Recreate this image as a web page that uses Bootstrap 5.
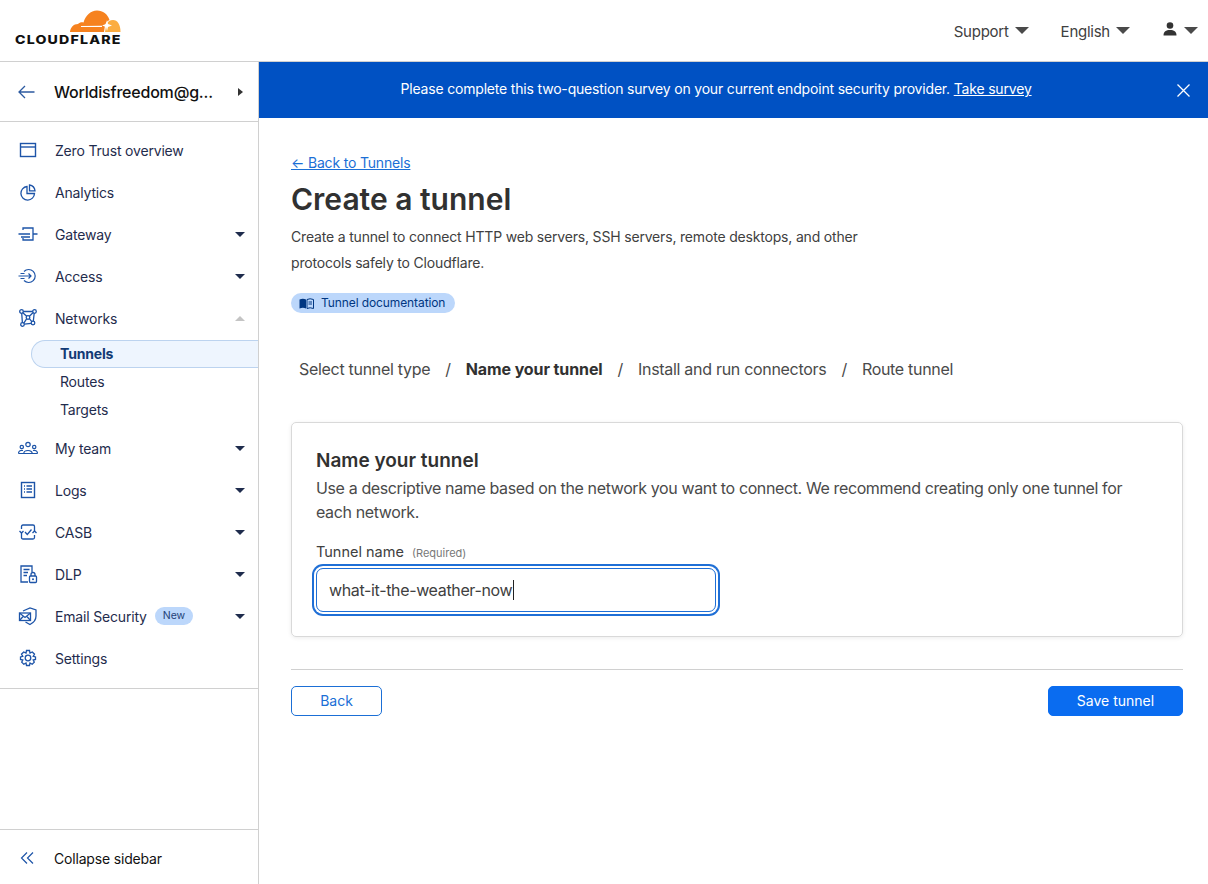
<!DOCTYPE html>
<html lang="en">
<head>
  <meta charset="utf-8">
  <title>Create a tunnel – Cloudflare Zero Trust</title>
  <meta name="viewport" content="width=device-width, initial-scale=1">
  <link href="https://cdn.jsdelivr.net/npm/bootstrap@5.3.2/dist/css/bootstrap.min.css" rel="stylesheet">
  <style>
    body { font-family: Inter, "Liberation Sans", sans-serif; font-size: 14px; letter-spacing: -.18px; color: #313131; height: 884px; overflow: hidden; }
    .top-head { height: 62px; border-bottom: 1px solid #d0d0d0; padding: 0 10px 0 15px; }
    .logo-box { width: 108px; margin-top: 9px; align-self: flex-start; }
    .logo-box svg { display: block; margin-left: 54px; }
    .logo-word { font-size: 12px; font-weight: 800; letter-spacing: 1px; color: #111; line-height: 12px; white-space: nowrap; transform: scaleX(1.18); transform-origin: left center; }
    .head-right { padding-top: 4px; }
    .head-link { font-size: 15px; letter-spacing: -.25px; color: #404040; }
    .tri-down { width: 0; height: 0; border-left: 7px solid transparent; border-right: 7px solid transparent; border-top: 7px solid #4a4a4a; margin-left: 6px; margin-bottom: 4px; }
    .gap-first { margin-right: 32px; }
    .gap-after { margin-right: 33px; }
    .user-icon { margin-right: 7px; margin-bottom: 7px; }
    .user-icon + .tri-down { margin-left: 0; }
    .side-bar { width: 259px; border-right: 1px solid #d0d0d0; height: 822px; flex-shrink: 0; }
    .acct-row { height: 60px; border-bottom: 1px solid #d0d0d0; padding: 0 15px 0 18px; color: #111; font-size: 16px; font-weight: 500; letter-spacing: -.2px; }
    .acct-name { margin-left: 18px; }
    .tri-right { width: 0; height: 0; border-top: 4px solid transparent; border-bottom: 4px solid transparent; border-left: 5px solid #333; margin-left: auto; }
    .side-list { padding: 8px 0; border-bottom: 1px solid #d0d0d0; height: 567px; }
    .side-item { height: 42px; padding: 0 13px 2px 18px; color: #1f2c4d; }
    .side-item svg { width: 20px; height: 20px; margin-right: 17px; flex-shrink: 0; }
    .tri-nav { width: 0; height: 0; border-left: 5px solid transparent; border-right: 5px solid transparent; border-top: 5px solid #1f2c4d; margin-left: auto; }
    .tri-up { border-top: 0; border-bottom: 5px solid #c4c4c4; }
    .sub-list { margin-bottom: 4px; }
    .sub-item { height: 28px; margin-left: 31px; padding: 0 0 2px 29px; color: #1f2c4d; display: flex; align-items: center; }
    .sub-active { background: #eef5fe; border: 1px solid #bcd3ef; border-right: 0; border-radius: 14px 0 0 14px; padding-left: 28px; font-weight: 700; color: #123a75; }
    .new-pill { background: #bcd7fb; color: #1f3f77; font-size: 10.5px; letter-spacing: 0; border-radius: 9px; padding: 0 8px; line-height: 18px; margin-left: 8px; }
    .side-foot { padding: 2px 0 0 20px; height: 55px; color: #111; border-top: 1px solid #d0d0d0; }
    .side-foot svg { margin-right: 19px; }
    .survey-bar { height: 56px; background: #0051c3; color: #fff; padding: 0 18px 0 0; }
    .survey-text { flex-grow: 1; text-align: center; padding-right: 4px; padding-bottom: 3px; }
    .survey-text a { color: #fff; }
    .main-pane { padding: 34px 25px 0 32px; }
    .back-link { color: #1b6fd6; line-height: 18px; display: inline-block; }
    .page-title { font-size: 30px; font-weight: 600; letter-spacing: 0; color: #313131; line-height: 36px; margin: 8px 0 7px; }
    .page-desc { line-height: 26px; width: 590px; color: #404040; margin-bottom: 17px; }
    .doc-pill { background: #bcd7fb; color: #003681; font-size: 12px; letter-spacing: -.1px; line-height: 20px; border-radius: 10px; padding: 0 8px; height: 20px; width: 164px; white-space: nowrap; }
    .doc-pill svg { margin-right: 7px; flex-shrink: 0; }
    .step-row { font-size: 16px; letter-spacing: -.3px; color: #4a4a4a; margin: 46px 0 0 8px; line-height: 20px; height: 20px; }
    .step-sep { margin: 0 15px; }
    .step-now { font-weight: 700; letter-spacing: -.1px; color: #313131; }
    .tunnel-card { margin-top: 43px; height: 215px; border: 1px solid #d9d9d9; border-radius: 5px; box-shadow: 0 1px 4px rgba(0,0,0,.08); padding: 25px 24px 24px; }
    .card-head { font-size: 19px; font-weight: 600; letter-spacing: 0; color: #313131; line-height: 26px; margin: 0; }
    .card-desc { font-size: 16px; letter-spacing: -.38px; line-height: 24px; color: #4a4a4a; margin: 2px 0 0; }
    .field-label { font-size: 14.5px; letter-spacing: 0; color: #404040; line-height: 18px; margin: 19px 0 6px; display: block; }
    .field-label small { font-size: 11px; color: #777; margin-left: 4px; }
    .field-wrap { width: 400px; }
    .name-input.form-control { height: 44px; width: 400px; border: 1px solid #1f6fd6; border-radius: 7px; padding: 0 12px; font-size: 16px; letter-spacing: -.35px; color: #404040; font-family: inherit; box-shadow: 0 0 0 2px #fff, 0 0 0 4px #1f6fd6; }
    .fake-caret { position: absolute; left: 197px; top: 12px; width: 1px; height: 20px; background: #222; }
    .foot-rule { margin: 32px 0 16px; border-top: 1px solid #d0d0d0; opacity: 1; }
    .btn-back.btn { width: 91px; height: 30px; padding: 0 0 2px; font-size: 14px; border-color: #1b6fd6; color: #1b6fd6; border-radius: 5px; }
    .btn-save.btn { width: 135px; height: 30px; padding: 0 0 2px; font-size: 14px; background: #0a6cf0; border-color: #0a6cf0; border-radius: 5px; }
  </style>
</head>
<body>

<header class="top-head d-flex align-items-center">
  <div class="logo-box">
    <svg width="52" height="25" viewBox="0 0 52 25" aria-hidden="true">
      <path fill="#fbad41" d="M36 23L37.500 15C39 12.500 41 11 44 11C48.500 11 51.500 15.500 51.500 23Z"/>
      <path fill="#f6821f" d="M1 23C1.500 18.500 4.500 15 9 15C10.500 13.500 12.500 13 14.500 13.500C16.500 6.500 21.500 1.500 28 1.500C34 1.500 38.500 5 40.500 11C38 12 36.500 14 36 16.500L35 23Z"/>
      <path fill="#fff" d="M12 17L33 16.800V18L12 18Z"/>
      <path fill="#fff" d="M38 11L39 15L43 16.500L39 18L38 22L37 18L33 16.500L37 15Z"/>
    </svg>
    <div class="logo-word">CLOUDFLARE</div>
  </div>
  <div class="head-right ms-auto d-flex align-items-center">
    <span class="head-link">Support</span><span class="tri-down gap-first"></span>
    <span class="head-link">English</span><span class="tri-down gap-after"></span>
    <svg class="user-icon" width="14" height="14" viewBox="0 0 14 14" aria-hidden="true">
      <circle cx="7" cy="3.500" r="3.300" fill="#333"/><path fill="#333" d="M0.500 13.500C0.500 9.500 3 8 7 8S13.500 9.500 13.500 13.500Z"/>
    </svg>
    <span class="tri-down"></span>
  </div>
</header>

<div class="d-flex">
  <aside class="side-bar d-flex flex-column">
    <div class="acct-row d-flex align-items-center">
      <svg width="18" height="14" viewBox="0 0 18 14" fill="none" stroke="#2c5aa0" stroke-width="1.300" aria-hidden="true"><path d="M16.500 7H1M7 1L1 7L7 13"/></svg>
      <span class="acct-name">Worldisfreedom@g...</span>
      <span class="tri-right"></span>
    </div>

    <nav class="side-list">
      <div class="side-item d-flex align-items-center">
        <svg viewBox="0 0 20 20" fill="none" stroke="#1d54a8" stroke-width="1.400"><rect x="2.500" y="3.500" width="15" height="13"/><path d="M2.500 7H17.500"/></svg>
        Zero Trust overview
      </div>
      <div class="side-item d-flex align-items-center">
        <svg viewBox="0 0 20 20" fill="none" stroke="#1d54a8" stroke-width="1.300"><path d="M9 4.500A6.800 6.800 0 1 0 16.500 11.500H9Z"/><path d="M11.500 3A6.500 6.500 0 0 1 17 8.800H11.500Z"/></svg>
        Analytics
      </div>
      <div class="side-item d-flex align-items-center">
        <svg viewBox="0 0 20 20" fill="none" stroke="#1d54a8" stroke-width="1.300"><path d="M5 6V4H15V16H5V14"/><path d="M0.500 10H12M15 10H19.500M3 13H12"/></svg>
        Gateway<span class="tri-nav"></span>
      </div>
      <div class="side-item d-flex align-items-center">
        <svg viewBox="0 0 20 20" fill="none" stroke="#1d54a8" stroke-width="1.200"><path d="M6 5.500A6.500 6.500 0 1 1 6 14.500"/><path d="M0.500 10H13M10.500 7.500L13 10L10.500 12.500M2.500 7.500H6.500M2.500 12.500H6.500"/></svg>
        Access<span class="tri-nav"></span>
      </div>
      <div class="side-item d-flex align-items-center">
        <svg viewBox="0 0 20 20" fill="none" stroke="#1d54a8" stroke-width="1.300"><circle cx="3.500" cy="3.500" r="1.800"/><circle cx="16.500" cy="3.500" r="1.800"/><circle cx="4.500" cy="16.500" r="1.800"/><circle cx="15" cy="15" r="1.800"/><circle cx="10" cy="9.500" r="1.800"/><path d="M5.300 3.500H14.700M3.700 5.300L4.400 14.700M16.200 5.300L15.300 13.200M6.300 16.200L13.300 15.300M4.800 4.800L8.700 8.300M14.900 4.700L11.400 8.200M8.600 10.800L5.800 15.200M11.400 10.700L13.800 13.700"/></svg>
        Networks<span class="tri-nav tri-up"></span>
      </div>
      <div class="sub-list">
        <div class="sub-item sub-active">Tunnels</div>
        <div class="sub-item">Routes</div>
        <div class="sub-item">Targets</div>
      </div>
      <div class="side-item d-flex align-items-center">
        <svg viewBox="0 0 20 20" fill="none" stroke="#1d54a8" stroke-width="1.200"><circle cx="10" cy="6.500" r="2.200"/><circle cx="3.800" cy="9" r="1.700"/><circle cx="16.200" cy="9" r="1.700"/><path d="M5.800 15.500C5.800 11.500 14.200 11.500 14.200 15.500ZM0.500 15.500C0.500 12.500 3 12 5 12.500M19.500 15.500C19.500 12.500 17 12 15 12.500M0.500 15.500H19.500"/></svg>
        My team<span class="tri-nav"></span>
      </div>
      <div class="side-item d-flex align-items-center">
        <svg viewBox="0 0 20 20" fill="none" stroke="#1d54a8" stroke-width="1.400"><rect x="3.500" y="2.500" width="13" height="15"/><path d="M6 6H7M8.500 6H14M6 9H7M8.500 9H14M6 12H7M8.500 12H14"/></svg>
        Logs<span class="tri-nav"></span>
      </div>
      <div class="side-item d-flex align-items-center">
        <svg viewBox="0 0 20 20" fill="none" stroke="#1d54a8" stroke-width="1.300"><path d="M3.500 7V4.500Q3.500 3 5 3H15Q16.500 3 16.500 4.500V9M16.500 13V15.500Q16.500 17 15 17H5Q3.500 17 3.500 15.500V11"/><path d="M1.500 9L3.500 11L5.500 9M14.500 11L16.500 9L18.500 11M7 10L9.300 12.500L13.500 7.500"/></svg>
        CASB<span class="tri-nav"></span>
      </div>
      <div class="side-item d-flex align-items-center">
        <svg viewBox="0 0 20 20" fill="none" stroke="#1d54a8" stroke-width="1.300"><path d="M10 18H3V2H14V8"/><path d="M5.500 5.500H11.500M5.500 8.500H10M5.500 11.500H9"/><rect x="11.500" y="12" width="7" height="6.500" rx="1" fill="#fff"/><path d="M13 12V10.500A2 2 0 0 1 17 10.500V12"/><circle cx="15" cy="15.200" r="1" fill="#1d54a8" stroke="none"/></svg>
        DLP<span class="tri-nav"></span>
      </div>
      <div class="side-item d-flex align-items-center">
        <svg viewBox="0 0 20 20" fill="none" stroke="#1d54a8" stroke-width="1.300"><path d="M5 5L12 2L18 4V10C18 14 15 17 12 18.500L7.500 16"/><rect x="1.500" y="7" width="11" height="7.500" fill="#fff"/><path d="M1.500 7L7 11.500L12.500 7M1.500 14.500L5.500 10M12.500 14.500L8.500 10"/></svg>
        Email Security<span class="new-pill">New</span><span class="tri-nav"></span>
      </div>
      <div class="side-item d-flex align-items-center">
        <svg viewBox="0 0 20 20" fill="none" stroke="#1d54a8" stroke-width="1.300"><circle cx="10" cy="10" r="2.800"/><path d="M8.500 2.500H11.500L12 5L14.300 4L16.500 6.200L15.200 8.300L17.500 9V11.500L15.200 12L16.300 14.200L14.200 16.300L12 15L11.500 17.500H8.500L8 15L5.800 16.300L3.700 14.200L4.800 12L2.500 11.500V9L4.800 8.300L3.500 6.200L5.700 4L8 5Z"/></svg>
        Settings
      </div>
    </nav>

    <div class="flex-grow-1"></div>
    <div class="side-foot d-flex align-items-center">
      <svg width="15" height="12" viewBox="0 0 15 12" fill="none" stroke="#1d54a8" stroke-width="1.200" aria-hidden="true"><path d="M7 0.500L1.500 6L7 11.500M13 0.500L7.500 6L13 11.500"/></svg>
      Collapse sidebar
    </div>
  </aside>

  <div class="flex-grow-1">
    <div class="survey-bar d-flex align-items-center">
      <div class="survey-text">Please complete this two-question survey on your current endpoint security provider. <a href="#">Take survey</a></div>
      <svg width="13" height="13" viewBox="0 0 13 13" stroke="#fff" stroke-width="1.300" aria-hidden="true"><path d="M0.500 0.500L12.500 12.500M12.500 0.500L0.500 12.500"/></svg>
    </div>

    <main class="main-pane">
      <a href="#" class="back-link">← Back to Tunnels</a>
      <h1 class="page-title">Create a tunnel</h1>
      <p class="page-desc">Create a tunnel to connect HTTP web servers, SSH servers, remote desktops, and other protocols safely to Cloudflare.</p>
      <div class="doc-pill d-flex align-items-center">
        <svg width="15" height="11" viewBox="0 0 15 11" aria-hidden="true"><path fill="#003681" d="M0.500 1.500Q4 0 7 1.500V10.500Q4 9 0.500 10.500Z"/><path fill="none" stroke="#003681" d="M8 1.500Q11 0 14.500 1.500V10.500Q11 9 8 10.500Z"/><path stroke="#003681" d="M9.500 4H13M9.500 6H13"/></svg>
        Tunnel documentation
      </div>

      <div class="step-row d-flex">
        <span>Select tunnel type</span><span class="step-sep">/</span>
        <span class="step-now">Name your tunnel</span><span class="step-sep">/</span>
        <span>Install and run connectors</span><span class="step-sep">/</span>
        <span>Route tunnel</span>
      </div>

      <section class="tunnel-card">
        <h2 class="card-head">Name your tunnel</h2>
        <p class="card-desc">Use a descriptive name based on the network you want to connect. We recommend creating only one tunnel for each network.</p>
        <label class="field-label" for="tunnel-name">Tunnel name <small>(Required)</small></label>
        <div class="field-wrap position-relative">
          <input type="text" id="tunnel-name" class="form-control name-input" value="what-it-the-weather-now">
          <span class="fake-caret"></span>
        </div>
      </section>

      <hr class="foot-rule">
      <div class="d-flex justify-content-between">
        <button type="button" class="btn btn-outline-primary btn-back">Back</button>
        <button type="button" class="btn btn-primary btn-save">Save tunnel</button>
      </div>
    </main>
  </div>
</div>

<script src="https://cdn.jsdelivr.net/npm/bootstrap@5.3.2/dist/js/bootstrap.bundle.min.js"></script>
</body>
</html>
